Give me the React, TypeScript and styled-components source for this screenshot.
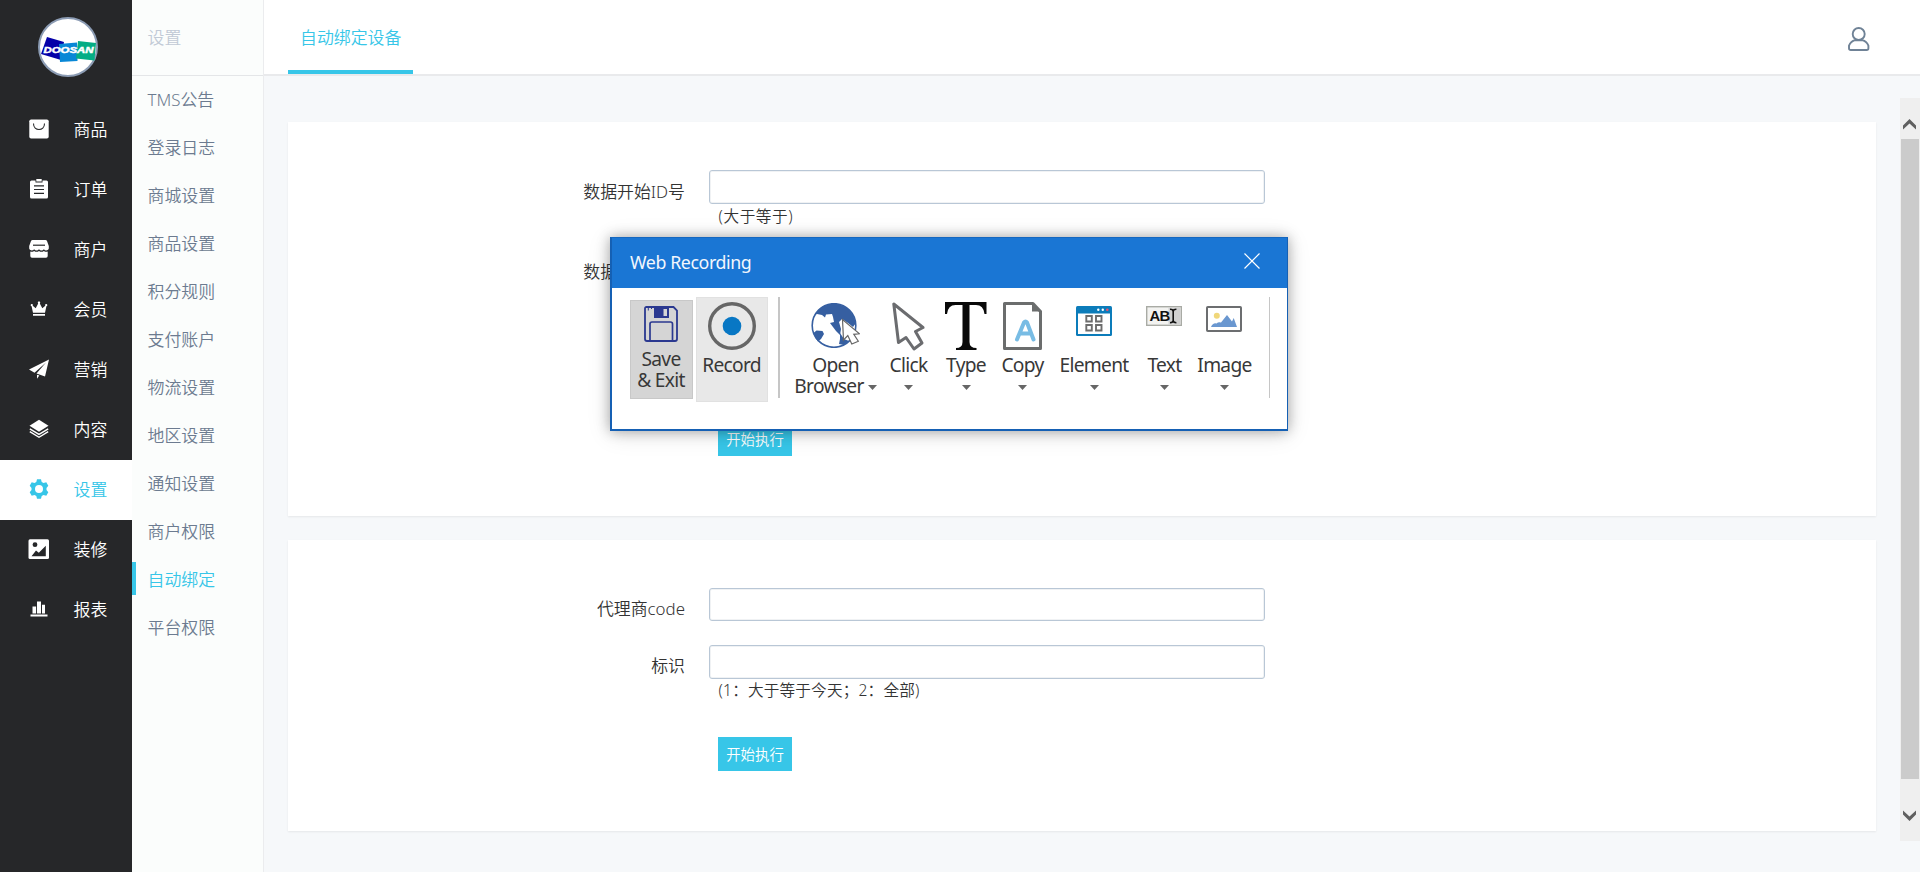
import React from 'react';
import styled, { createGlobalStyle } from 'styled-components';

const ACCENT = '#37c6e8';
const UI_FONT = '"Noto Sans", "Noto Sans CJK SC", sans-serif';

const GlobalStyle = createGlobalStyle`
  * { box-sizing: border-box; }
  html, body { margin: 0; padding: 0; }
  body {
    width: 1920px;
    height: 872px;
    overflow: hidden;
    background: #f6f8fa;
    font-family: ${UI_FONT};
    font-size: 16.9px;
    font-weight: 350;
  }
  svg { display: block; }
`;

const Page = styled.div`
  position: relative;
  display: flex;
  width: 1920px;
  height: 872px;
  overflow: hidden;
`;

/* ---------- main navigation ---------- */

const MainNav = styled.nav`
  width: 132px;
  flex: none;
  background: #262729;
`;

const LogoBox = styled.div`
  height: 100px;
  padding: 17px 0 0 38px;
`;

const NavItem = styled.a<{ $active?: boolean }>`
  display: flex;
  align-items: center;
  height: 60px;
  padding-left: 29px;
  gap: 24.5px;
  color: ${(p) => (p.$active ? ACCENT : '#fff')};
  background: ${(p) => (p.$active ? '#fff' : 'transparent')};
  line-height: 24px;
`;

const NavIcon = styled.svg`
  width: 20px;
  height: 20px;
  flex: none;
  margin-bottom: 2px;
`;

/* ---------- secondary navigation ---------- */

const SubNav = styled.aside`
  width: 132px;
  flex: none;
  background: #fbfdfc;
  border-right: 1px solid #ebecee;
`;

const SubTitle = styled.div`
  height: 76px;
  margin-bottom: -2px;
  padding-left: 15.500px;
  border-bottom: 1px solid #e4e6e8;
  line-height: 75px;
  color: #c1cad6;
`;

const SubItem = styled.a<{ $active?: boolean }>`
  display: flex;
  align-items: center;
  height: 48px;
  color: ${(p) => (p.$active ? ACCENT : '#6c7b90')};
  &::before {
    content: '';
    width: 4px;
    height: 33px;
    margin: 1px 11.500px 0 0;
    background: ${(p) => (p.$active ? ACCENT : 'transparent')};
  }
`;

/* ---------- content ---------- */

const Main = styled.main`
  flex: 1;
  display: flex;
  flex-direction: column;
`;

const TopBar = styled.header`
  display: flex;
  justify-content: space-between;
  height: 76px;
  padding: 0 50px 0 24px;
  background: #fff;
  border-bottom: 2px solid #e9eaec;
`;

const Tab = styled.div`
  width: 125px;
  height: 74px;
  padding-left: 12px;
  border-bottom: 4px solid ${ACCENT};
  color: ${ACCENT};
  line-height: 76px;
  white-space: nowrap;
`;

const UserIcon = styled.svg`
  margin-top: 27px;
`;

const Body = styled.div`
  display: flex;
  justify-content: space-between;
  flex: 1;
  padding-left: 24px;
`;

const Cards = styled.div`
  display: flex;
  flex-direction: column;
  gap: 24px;
  width: 1588px;
  padding-top: 46px;
`;

const Card = styled.section<{ $height: number }>`
  height: ${(p) => p.$height}px;
  padding-top: 48px;
  background: #fff;
  box-shadow: 0 1px 2px rgba(0, 0, 0, 0.07);
  color: #333;
`;

const Field = styled.div<{ $height: number }>`
  display: flex;
  gap: 24px;
  height: ${(p) => p.$height}px;
`;

const Label = styled.label<{ $line?: number }>`
  width: 397px;
  text-align: right;
  line-height: ${(p) => p.$line ?? 43}px;
`;

const Control = styled.div`
  width: 556px;
`;

const Input = styled.input<{ $h?: number }>`
  display: block;
  width: 556px;
  height: ${(p) => p.$h ?? 34}px;
  border: 1px solid #b9c7d6;
  border-radius: 3px;
  outline: none;
  background: #fff;
  box-shadow: inset 0 0 0 1px #f0f2f4;
`;

const Hint = styled.div<{ $line?: number; $spacing?: number }>`
  padding-left: 9.5px;
  font-size: 15.6px;
  line-height: ${(p) => p.$line ?? 23}px;
  letter-spacing: ${(p) => p.$spacing ?? 0.2}px;
`;

const RunButton = styled.button`
  display: block;
  width: 74px;
  height: 34px;
  margin-left: 430px;
  padding: 2px 0 0;
  border: 0;
  background: ${ACCENT};
  color: #fff;
  font: 350 14.4px/20px ${UI_FONT};
  white-space: nowrap;
`;

const ScrollTrack = styled.div`
  display: flex;
  flex-direction: column;
  width: 20px;
  height: 743px;
  margin-top: 22px;
  padding: 0 1px;
  background: #efefef;
`;

const ScrollThumb = styled.div`
  height: 640px;
  background: #cbcbcb;
`;

const ScrollArrow = styled.svg<{ $top: number; $bottom: number }>`
  margin: ${(p) => p.$top}px 0 ${(p) => p.$bottom}px 2px;
`;

/* ---------- recorder window ---------- */

const Recorder = styled.div`
  position: absolute;
  left: 610px;
  top: 237px;
  width: 678px;
  height: 194px;
  border: 2px solid #1560b4;
  border-right-width: 1px;
  border-top: 1px solid #1668c0;
  background: #fff;
  box-shadow: 0 0 12px rgba(0, 0, 0, 0.3), 0 3px 22px rgba(0, 0, 0, 0.13);
  color: #383838;
  font-weight: 400;
`;

const TitleBar = styled.div`
  display: flex;
  justify-content: space-between;
  height: 50px;
  padding: 15px 27px 0 18px;
  background: #1a76d4;
  color: #f2f7fd;
  font-size: 17.8px;
  line-height: 19px;
  letter-spacing: -0.4px;
`;

const Tools = styled.div`
  display: flex;
  align-items: flex-start;
  padding: 9px 0 0 18px;
  font-size: 19.2px;
  line-height: 21px;
  letter-spacing: -0.7px;
`;

const Pressed = styled.div<{ $w: number; $h: number; $offset: number; $tone: string; $edge: string; $pad: number }>`
  display: flex;
  flex-direction: column;
  align-items: center;
  width: ${(p) => p.$w}px;
  height: ${(p) => p.$h}px;
  margin-top: ${(p) => p.$offset}px;
  margin-right: 3px;
  padding: ${(p) => p.$pad}px 1px 0 0;
  background: ${(p) => p.$tone};
  border: 1px solid ${(p) => p.$edge};
  text-align: center;
  white-space: nowrap;
`;

const ButtonText = styled.div<{ $top: number }>`
  margin-top: ${(p) => p.$top}px;
`;

const Divider = styled.div<{ $w: number; $gap: number }>`
  width: ${(p) => p.$w}px;
  height: 101px;
  margin-left: ${(p) => p.$gap}px;
  background: #c6c6c6;
`;

const Tool = styled.div<{ $w: number; $gap: number }>`
  display: flex;
  flex-direction: column;
  align-items: center;
  width: ${(p) => p.$w}px;
  margin-left: ${(p) => p.$gap}px;
  white-space: nowrap;
`;

const ToolIcon = styled.div<{ $top: number }>`
  height: 57px;
  padding: ${(p) => p.$top}px 1px 0 0;
`;

const CaretRow = styled.div`
  display: flex;
  align-items: center;
  gap: 4px;
  height: 21px;
  svg {
    margin-top: 3px;
  }
`;

const Caret = () => (
  <svg width="9" height="5" viewBox="0 0 9 5">
    <path d="M0 0h9L4.500 5z" fill="#666" />
  </svg>
);

/* ---------- navigation icons ---------- */

const navItems: { text: string; icon: React.ReactNode; active?: boolean }[] = [
  {
    text: '商品',
    icon: (
      <>
        <rect x="0.300" y="0.500" width="19.400" height="19" rx="1.800" fill="currentColor" />
        <path d="M4.500 4.500c0 8 11 8 11 0" fill="none" stroke="#262729" strokeWidth="1.100" />
      </>
    ),
  },
  {
    text: '订单',
    icon: (
      <>
        <path d="M2.500 1.500h4v2h7v-2h4q1.500 0 1.500 1.500v15q0 1.500-1.500 1.500h-15Q1 19.500 1 18V3q0-1.500 1.500-1.500z" fill="currentColor" />
        <path d="M7.300 0h5.400v2.500H7.300z" fill="currentColor" />
        <path d="M5 6.800h10M5 10.500h10M5 14.300h10" stroke="#262729" strokeWidth="1.200" />
      </>
    ),
  },
  {
    text: '商户',
    icon: (
      <>
        <path d="M3.500 1h13q1 0 1.500 1l1.800 5v2.500c-1 2.500-3.700 2.500-4.900.8-1.300 1.700-3.600 1.700-4.900 0-1.300 1.700-3.600 1.700-4.900 0C3.900 12 1.200 12 .2 9.500V7L2 2q.500-1 1.500-1z" fill="currentColor" />
        <path d="M1.300 12.600c1.400.5 2.700.2 3.800-.7 1.500 1.200 3.400 1.200 4.900 0 1.500 1.200 3.400 1.200 4.900 0 1.100.9 2.400 1.200 3.800.7V17q0 1.800-1.700 1.800H3q-1.700 0-1.700-1.800z" fill="currentColor" />
        <path d="M4 6.200h12" stroke="#262729" strokeWidth="1.200" />
      </>
    ),
  },
  {
    text: '会员',
    icon: (
      <path d="M4 13.700 2.600 7.200a1.100 1.100 0 1 1 1.100-.5l3 2.500 2.500-4.800a1.200 1.200 0 1 1 1.600 0l2.500 4.800 3-2.500a1.100 1.100 0 1 1 1.100.5L16 13.700zM4 15h12v1.700H4z" fill="currentColor" />
    ),
  },
  {
    text: '营销',
    icon: (
      <>
        <path d="M20 .5 0 10.500l5.500 3.200L17 3.500 7.500 14.600l8.500 3z" fill="currentColor" />
        <path d="M8 15.700v4l2.300-3.100z" fill="currentColor" />
      </>
    ),
  },
  {
    text: '内容',
    icon: (
      <>
        <path d="m10 .7 9.500 6-9.500 6-9.500-6z" fill="currentColor" />
        <path d="m.8 9.800 9.200 5.600 9.200-5.600M.8 12.700l9.200 5.600 9.200-5.600" fill="none" stroke="currentColor" strokeWidth="1.400" />
      </>
    ),
  },
  {
    text: '设置',
    active: true,
    icon: (
      <path
        fillRule="evenodd"
        d="M8 .3h4l.7 2.800 1.800 1 2.800-.8 2 3.500-1.800 2.100v2.200l1.800 2.100-2 3.500-2.800-.8-1.800 1-.7 2.800H8l-.7-2.800-1.800-1-2.800.8-2-3.500 1.800-2.100V8.900L.7 6.800l2-3.500 2.800.8 1.800-1zM10 6a4 4 0 1 0 0 8 4 4 0 0 0 0-8z"
        fill="currentColor"
      />
    ),
  },
  {
    text: '装修',
    icon: (
      <>
        <rect x="-0.500" y="0.300" width="20.500" height="19.700" rx="1.500" fill="currentColor" />
        <circle cx="6" cy="5.700" r="2.400" fill="#262729" />
        <path d="m2.500 17.200 4.500-5.700 2.800 2.300 7-7v10.400z" fill="#262729" />
      </>
    ),
  },
  {
    text: '报表',
    icon: <path d="M3.500 7.500h3.600v7H3.500zM8 2.500h4v12H8zM13 5.800h3v8.700h-3zM1.500 15.500h17v2h-17z" fill="currentColor" />,
  },
];

const subItems = ['TMS公告', '登录日志', '商城设置', '商品设置', '积分规则', '支付账户', '物流设置', '地区设置', '通知设置', '商户权限', '自动绑定', '平台权限'];

const Logo = () => (
  <svg width="60" height="60" viewBox="0 0 60 60">
    <circle cx="30" cy="30" r="29" fill="#fff" stroke="#8c9cb4" strokeWidth="2" />
    <path d="m9 20 17 5-3 18-20-6z" fill="#0500a8" />
    <path d="m21 27 18-1.500.5 18.500-17.500 1z" fill="#0887d6" />
    <path d="m40 24 18 2-1.500 17.500-18.500-2z" fill="#04ad85" />
    <text x="5.500" y="36" fill="#fff" fontFamily="Liberation Sans, sans-serif" fontSize="9.500" fontWeight="700" fontStyle="italic" textLength="50" lengthAdjust="spacingAndGlyphs" stroke="#fff" strokeWidth="0.500">
      DOOSAN
    </text>
  </svg>
);

/* ---------- toolbar icons ---------- */

const SaveIcon = () => (
  <svg width="34" height="36" viewBox="0 0 34 36">
    <path d="M2.500 1h27L33 4.500V33q0 2-2 2H3q-2 0-2-2V2.500Q1 1 2.500 1z" fill="none" stroke="#2b3990" strokeWidth="1.800" />
    <path d="M10 1h15v11H10z" fill="#2b3990" />
    <path d="M19.500 3h3.500v7h-3.500z" fill="#d5d5d5" />
    <path d="M6 35V18q0-2 2-2h18.500q2 0 2 2v17" fill="none" stroke="#2b3990" strokeWidth="1.700" />
    <path d="M4.300 1.500v3M7.500 1.500v1.500" stroke="#2b3990" strokeWidth="1" />
  </svg>
);

const RecordIcon = () => (
  <svg width="48" height="48" viewBox="0 0 48 48">
    <circle cx="24" cy="24" r="22.300" fill="none" stroke="#666" strokeWidth="3.400" />
    <circle cx="24" cy="24" r="9.300" fill="#0877c4" />
  </svg>
);

const GlobeIcon = () => (
  <svg width="49" height="45" viewBox="0 0 49 45">
    <circle cx="23" cy="22.500" r="21.800" fill="#fff" stroke="#365fa1" strokeWidth="1.600" />
    <path d="M3.500 12Q10 1 23 .5q12 .5 19 11.500l3 8-3 4-5-4-6-4-3 3 2 7-1 6-4-4-6-8 4-1-1-5-1-3-6 .5-1 3-3-2.500-5-1z" fill="#365fa1" />
    <path d="m2.500 30 3-2.500 6 .5 1.500 3-3 5-3 2.500q-3-3-4.500-8.500z" fill="#365fa1" />
    <path d="m29 30 4 6 5 2-5 4-5-1 1-5z" fill="#365fa1" />
    <path d="m31.500 16.500 1 20.500 4.300-4.500 4 8.500 6.500-2.700-4.500-7 5.700-.5z" fill="#fff" stroke="#666" strokeWidth="1.200" />
  </svg>
);

const PointerIcon = () => (
  <svg width="33" height="49" viewBox="0 0 33 49">
    <path d="M1.800 2 6.500 40.500l7.500-5 8 11.500 8-6-6.500-11.500 7.500-4z" fill="#fff" stroke="#6b6c6f" strokeWidth="3" strokeLinejoin="round" />
  </svg>
);

const TypeIcon = () => (
  <svg width="42" height="49" viewBox="0 0 42 49">
    <path d="M0 0h41.500v12h-2Q38.500 3 31 3H24.500v37q0 6 7 6v2H11v-2q6.500 0 6.500-6V3h-7Q3 3 2 12H0z" fill="#090909" />
  </svg>
);

const CopyIcon = () => (
  <svg width="39" height="49" viewBox="0 0 39 49">
    <path d="M1.500 1.500h28.500l7.500 8v37h-36z" fill="#fff" stroke="#6b6d6d" strokeWidth="3" strokeLinejoin="round" />
    <path d="M29 0v9.500h10z" fill="#6b6d6d" />
    <path d="m14 37.500 7-17q1.500-2 3 0l6.500 17M17 31.500h11" fill="none" stroke="#78bce4" strokeWidth="4" strokeLinecap="round" strokeLinejoin="round" />
  </svg>
);

const ElementIcon = () => (
  <svg width="36" height="30" viewBox="0 0 36 30">
    <rect width="36" height="30" rx="1.500" fill="#0c7cba" />
    <path d="M2 7.500h32V28H2z" fill="#fff" />
    <path d="M10.300 10h5.500v5.500h-5.500zM20 10h5.500v5.500H20zM10.300 19h5.500v5.500h-5.500zM20 19h5.500v5.500H20z" fill="#fff" stroke="#6d6d6d" strokeWidth="1.900" />
    <circle cx="22.300" cy="3.800" r="1.200" fill="#fff" />
    <circle cx="26.800" cy="3.800" r="1.200" fill="#fff" />
    <circle cx="31.300" cy="3.800" r="1.300" fill="#f0506e" />
  </svg>
);

const TextIcon = () => (
  <svg width="36" height="20" viewBox="0 0 36 20">
    <rect x="0.700" y="0.700" width="34.600" height="18.600" fill="#f3f3f1" stroke="#a9aba5" strokeWidth="1.400" />
    <path d="M22.500 1.500h12v17h-12z" fill="#d0d0d0" />
    <text x="3.500" y="15" fontFamily="Liberation Sans, sans-serif" fontWeight="700" fontSize="14" fill="#111" textLength="20" lengthAdjust="spacingAndGlyphs">
      AB
    </text>
    <path d="M24 3.300q3 0 3.200 2 .2-2 3.200-2M27.200 4.500v11M24 16.700q3 0 3.200-2 .2 2 3.200 2" fill="none" stroke="#111" strokeWidth="1.600" />
  </svg>
);

const ImageIcon = () => (
  <svg width="36" height="26" viewBox="0 0 36 26">
    <rect x="1" y="1" width="34" height="24" rx="0.800" fill="#fff" stroke="#6c6e70" strokeWidth="2" />
    <circle cx="10.800" cy="9.700" r="3" fill="#f0d77a" />
    <path d="M5 21q2-4.500 5.500-3.500 2-2 4.500-1L21 9l5 6.500 1.700-3.500L31 21z" fill="#6a97d0" />
  </svg>
);

const tools = [
  { text: 'Click', w: 41, gap: 12, top: 5, icon: <PointerIcon /> },
  { text: 'Type', w: 42, gap: 16, top: 5, icon: <TypeIcon /> },
  { text: 'Copy', w: 45, gap: 13, top: 5, icon: <CopyIcon /> },
  { text: 'Element', w: 70, gap: 14, top: 9, icon: <ElementIcon /> },
  { text: 'Text', w: 35, gap: 18, top: 9, icon: <TextIcon /> },
  { text: 'Image', w: 53, gap: 16, top: 9, icon: <ImageIcon /> },
];

const RecorderWindow = () => (
  <Recorder>
    <TitleBar>
      <span>Web Recording</span>
      <svg width="16" height="16" viewBox="0 0 16 16">
        <path d="m.5.500 15 15M15.500.500l-15 15" stroke="#fff" strokeWidth="1.200" />
      </svg>
    </TitleBar>
    <Tools>
      <Pressed $w={63} $h={99} $offset={3} $pad={5} $tone="#d5d5d5" $edge="#c8c8c8">
        <SaveIcon />
        <ButtonText $top={6}>
          Save
          <br />
          &amp; Exit
        </ButtonText>
      </Pressed>
      <Pressed $w={72} $h={105} $offset={0} $pad={4} $tone="#e8e8e8" $edge="#e1e1e1">
        <RecordIcon />
        <ButtonText $top={4}>Record</ButtonText>
      </Pressed>
      <Divider $w={2} $gap={7} />
      <Tool $w={81} $gap={15}>
        <ToolIcon $top={6}>
          <GlobeIcon />
        </ToolIcon>
        <span>Open</span>
        <CaretRow>
          <span>Browser</span>
          <Caret />
        </CaretRow>
      </Tool>
      {tools.map((t) => (
        <Tool key={t.text} $w={t.w} $gap={t.gap}>
          <ToolIcon $top={t.top}>{t.icon}</ToolIcon>
          <span>{t.text}</span>
          <CaretRow>
            <Caret />
          </CaretRow>
        </Tool>
      ))}
      <Divider $w={1} $gap={18} />
    </Tools>
  </Recorder>
);

export default function App() {
  return (
    <>
      <GlobalStyle />
      <Page>
        <MainNav>
          <LogoBox>
            <Logo />
          </LogoBox>
          {navItems.map((n) => (
            <NavItem key={n.text} $active={n.active}>
              <NavIcon viewBox="0 0 20 20" overflow="visible">
                {n.icon}
              </NavIcon>
              <span>{n.text}</span>
            </NavItem>
          ))}
        </MainNav>
        <SubNav>
          <SubTitle>设置</SubTitle>
          {subItems.map((s) => (
            <SubItem key={s} $active={s === '自动绑定'}>
              {s}
            </SubItem>
          ))}
        </SubNav>
        <Main>
          <TopBar>
            <Tab>自动绑定设备</Tab>
            <UserIcon width="22" height="24" viewBox="0 0 22 24" fill="none" stroke="#6f8296" strokeWidth="1.900">
              <circle cx="10.700" cy="7" r="6" />
              <path d="M7 13.200h7.400q4 1 6 5.500v2.500q0 1.800-1.800 1.800H2.800Q1 23 1 21.200v-2.500q2-4.500 6-5.500z" />
            </UserIcon>
          </TopBar>
          <Body>
            <Cards>
              <Card $height={394}>
                <Field $height={80}>
                  <Label>数据开始ID号</Label>
                  <Control>
                    <Input />
                    <Hint $line={25} $spacing={0.6}>(大于等于)</Hint>
                  </Control>
                </Field>
                <Field $height={172}>
                  <Label>数据结束ID号</Label>
                  <Control>
                    <Input />
                    <Hint>(小于等于)</Hint>
                  </Control>
                </Field>
                <RunButton>开始执行</RunButton>
              </Card>
              <Card $height={291}>
                <Field $height={57}>
                  <Label $line={41}>代理商code</Label>
                  <Control>
                    <Input $h={33} />
                  </Control>
                </Field>
                <Field $height={92}>
                  <Label $line={41}>标识</Label>
                  <Control>
                    <Input />
                    <Hint>(1：大于等于今天；2：全部)</Hint>
                  </Control>
                </Field>
                <RunButton>开始执行</RunButton>
              </Card>
            </Cards>
            <ScrollTrack>
              <ScrollArrow $top={21} $bottom={9} width="13" height="11" viewBox="0 0 13 11">
                <path d="M0 6.500 6.500 0 13 6.500v4L6.500 4.500 0 10.500z" fill="#606060" />
              </ScrollArrow>
              <ScrollThumb />
              <ScrollArrow $top={31} $bottom={0} width="13" height="11" viewBox="0 0 13 11">
                <path d="M0 4.500 6.500 11 13 4.500v-4L6.500 6.500 0 .500z" fill="#606060" />
              </ScrollArrow>
            </ScrollTrack>
          </Body>
        </Main>
        <RecorderWindow />
      </Page>
    </>
  );
}
